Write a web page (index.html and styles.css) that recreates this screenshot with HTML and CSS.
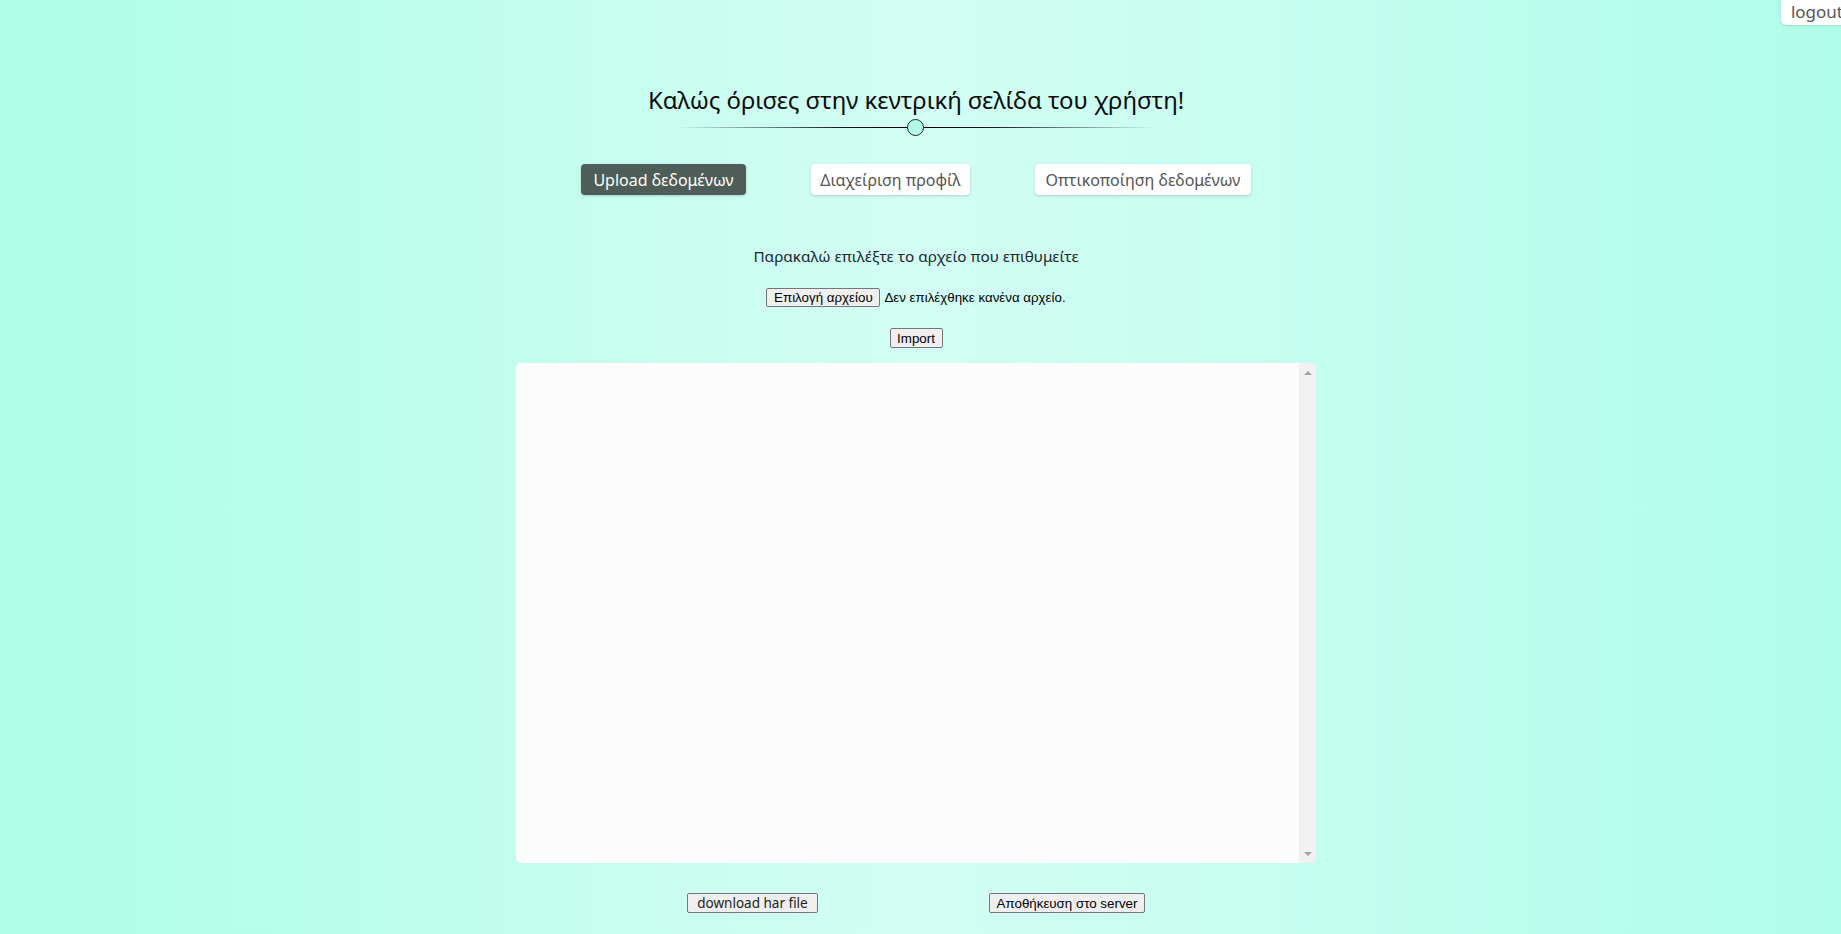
FILE: index.html
```html
<!DOCTYPE html>
<html lang="el">
<head>
<meta charset="utf-8">
<title>Αρχική σελίδα χρήστη</title>
<link rel="stylesheet" href="styles.css">
</head>
<body>
<button class="logout" type="button">logout</button>
<main class="page">
  <header class="welcome">
    <h1 class="welcome-title">Καλώς όρισες στην κεντρική σελίδα του χρήστη!</h1>
    <div class="divider"><span class="divider-dot"></span></div>
  </header>

  <nav class="tabs">
    <button class="tab tab-upload is-active" type="button">Upload δεδομένων</button>
    <button class="tab tab-profile" type="button">Διαχείριση προφίλ</button>
    <button class="tab tab-visual" type="button">Οπτικοποίηση δεδομένων</button>
  </nav>

  <section class="upload">
    <p class="upload-prompt">Παρακαλώ επιλέξτε το αρχείο που επιθυμείτε</p>
    <div class="file-row">
      <button class="native-btn file-btn" type="button">Επιλογή αρχείου</button>
      <span class="file-name">Δεν επιλέχθηκε κανένα αρχείο.</span>
    </div>
    <button class="native-btn import-btn" type="button">Import</button>

    <div class="editor">
      <textarea class="editor-text" aria-label="Περιεχόμενο αρχείου"></textarea>
      <div class="scrollbar">
        <span class="arrow arrow-up"></span>
        <span class="arrow arrow-down"></span>
      </div>
    </div>

    <div class="actions">
      <button class="native-btn download-btn" type="button">download har file</button>
      <button class="native-btn save-btn" type="button">Αποθήκευση στο server</button>
    </div>
  </section>
</main>
</body>
</html>
```

FILE: styles.css
```css
* { box-sizing: border-box; }

html, body {
  margin: 0;
  padding: 0;
}

body {
  min-height: 934px;
  background: linear-gradient(to right, #adfde7 0%, #d3fef4 50%, #b0fde9 100%);
  font-family: "Noto Sans", "DejaVu Sans", sans-serif;
  color: #111;
  position: relative;
  overflow: hidden;
}

.logout {
  position: absolute;
  top: -6px;
  right: -12px;
  height: 31px;
  padding: 5px 10px 0 10px;
  border: none;
  border-radius: 6px;
  background: #fff;
  color: #555;
  font-family: "Noto Sans", sans-serif;
  font-size: 17px;
  line-height: 22px;
  box-shadow: 0 1px 3px rgba(0,0,0,0.12);
}

.page {
  display: flex;
  flex-direction: column;
  align-items: center;
  padding: 0 9px 0 0;
}

.welcome {
  margin-top: 84px;
  display: flex;
  flex-direction: column;
  align-items: center;
}

.welcome-title {
  margin: 0;
  font-size: 24px;
  font-weight: 400;
  line-height: 32px;
  color: #0c0c0c;
  letter-spacing: -0.1px;
  white-space: nowrap;
}

.divider {
  width: 480px;
  height: 17px;
  margin-top: 3px;
  display: flex;
  justify-content: center;
  align-items: center;
  background: linear-gradient(to right, rgba(0,0,0,0) 0%, rgba(0,0,0,0.9) 35%, #000 50%, rgba(0,0,0,0.9) 65%, rgba(0,0,0,0) 100%) center / 100% 1px no-repeat;
}

.divider-dot {
  width: 17px;
  height: 17px;
  border-radius: 50%;
  background: #b3fbe9;
  border: 1px solid #1c2b27;
}

.tabs {
  display: flex;
  gap: 65px;
  margin-top: 28px;
}

.tab {
  height: 31px;
  border: none;
  border-radius: 4px;
  background: #fff;
  color: #555;
  font-family: "Noto Sans", sans-serif;
  font-size: 16px;
  padding: 0;
  box-shadow: 0 1px 3px rgba(0,0,0,0.18);
  white-space: nowrap;
}

.tab-upload { width: 165px; }
.tab-profile { width: 159px; }
.tab-visual { width: 216px; }

.tab.is-active {
  background: #4f5d58;
  color: #fff;
}

.upload {
  display: flex;
  flex-direction: column;
  align-items: center;
}

.upload-prompt {
  margin: 49px 0 0 0;
  font-size: 15.3px;
  line-height: 24px;
  color: #1b2630;
  white-space: nowrap;
}

.file-row {
  display: flex;
  align-items: center;
  gap: 4px;
  margin-top: 20px;
  height: 19px;
}

.native-btn {
  font-family: "Liberation Sans", Arial, sans-serif;
  font-size: 13.33px;
  color: #000;
  background: #efefef;
  border: 1px solid #767676;
  border-radius: 2px;
  padding: 0 6px;
  height: 19px;
  line-height: 17px;
  white-space: nowrap;
}

.file-btn { width: 114px; padding: 0; }

.file-name {
  font-family: "Liberation Sans", Arial, sans-serif;
  font-size: 13.33px;
  color: #000;
  white-space: nowrap;
}

.import-btn {
  margin-top: 21px;
  width: 53px;
  height: 20px;
  padding: 0;
}

.editor {
  margin-top: 15px;
  width: 800px;
  height: 500px;
  display: flex;
  border-radius: 5px;
  overflow: hidden;
  background: #fcfcfc;
}

.editor-text {
  flex: 1;
  border: none;
  outline: none;
  resize: none;
  background: #fcfcfc;
  margin: 0;
  padding: 2px;
  font-family: "Liberation Mono", monospace;
  font-size: 13px;
}

.scrollbar {
  width: 17px;
  background: #f1f1f1;
  display: flex;
  flex-direction: column;
  justify-content: space-between;
  align-items: center;
  padding: 8px 0 7px 0;
}

.arrow {
  width: 0;
  height: 0;
  border-left: 4px solid transparent;
  border-right: 4px solid transparent;
}

.arrow-up { border-bottom: 4px solid #a3a3a3; }
.arrow-down { border-top: 4px solid #a3a3a3; }

.actions {
  display: flex;
  gap: 171px;
  margin-top: 30px;
}

.download-btn {
  width: 131px;
  height: 20px;
  padding: 0;
  font-family: "Noto Sans", sans-serif;
  font-size: 13.5px;
  color: #222;
}

.save-btn {
  width: 156px;
  height: 20px;
  padding: 0;
}
```
